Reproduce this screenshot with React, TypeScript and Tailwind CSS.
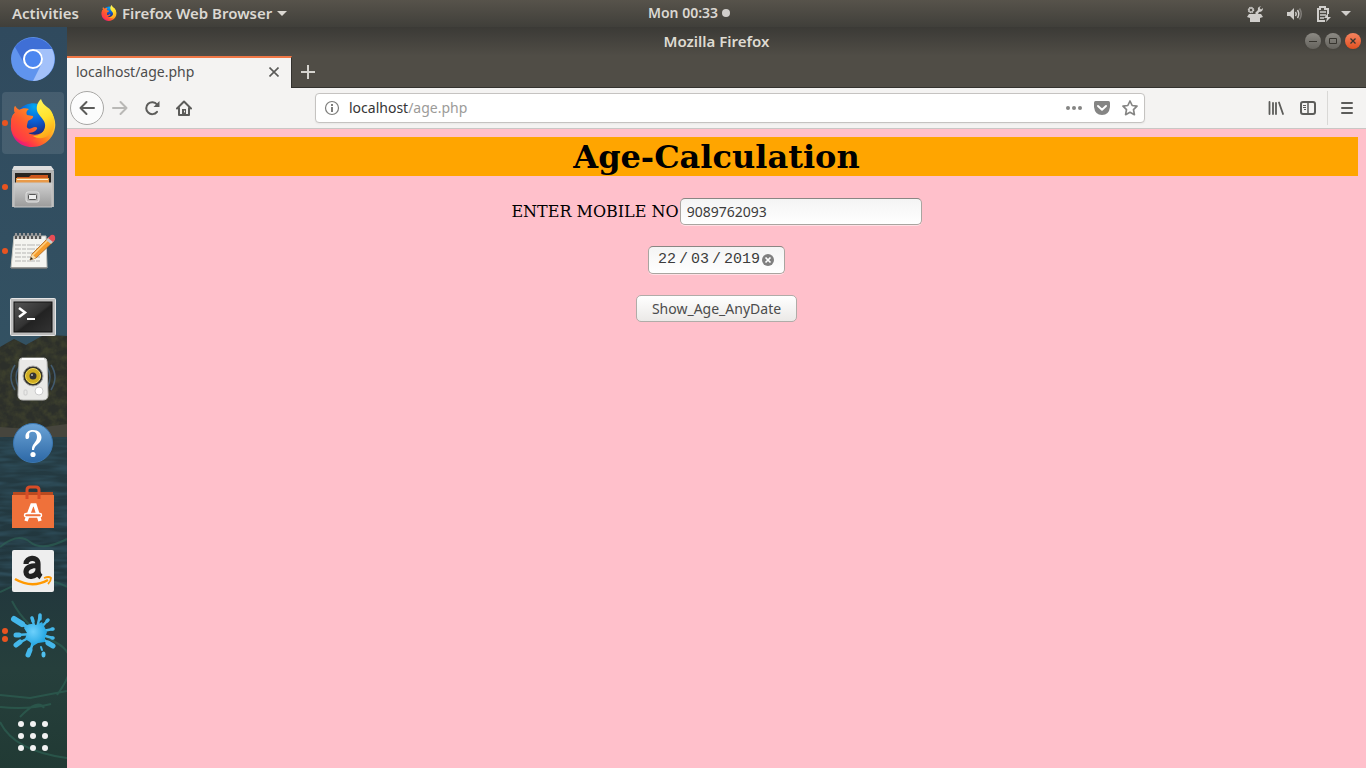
import { useState } from 'react';
import type { ReactNode } from 'react';

function FirefoxLogo({ id, className }: { id: string; className: string }) {
  return (
    <svg viewBox="0 0 46 48" className={className} aria-hidden="true">
      <defs>
        <linearGradient id={id + 'body'} x1="0.9" y1="0.05" x2="0.15" y2="0.9">
          <stop offset="0" stopColor="#fff14a" />
          <stop offset="0.35" stopColor="#ffbd2b" />
          <stop offset="0.6" stopColor="#ff7b20" />
          <stop offset="0.85" stopColor="#ff3647" />
          <stop offset="1" stopColor="#e31587" />
        </linearGradient>
        <linearGradient id={id + 'head'} x1="0.8" y1="0" x2="0.1" y2="1">
          <stop offset="0" stopColor="#ff9a1f" />
          <stop offset="0.5" stopColor="#ff5a2e" />
          <stop offset="1" stopColor="#ff2b50" />
        </linearGradient>
        <radialGradient id={id + 'globe'} cx="0.55" cy="0.1" r="0.9">
          <stop offset="0" stopColor="#00a9f0" />
          <stop offset="0.5" stopColor="#0a62d8" />
          <stop offset="1" stopColor="#1c2a80" />
        </radialGradient>
        <linearGradient id={id + 'flame'} x1="0.3" y1="0" x2="0.6" y2="1">
          <stop offset="0" stopColor="#fff35a" />
          <stop offset="0.5" stopColor="#ffe32e" />
          <stop offset="1" stopColor="#ffa318" />
        </linearGradient>
      </defs>
      <path
        d="M5 7C6 9 8 10 9 11C20 3 36 5 41 13C46 20 47 29 42 37C37 45 29 48 22 48C8 48 0 37 1 25C1 20 2 16 5 14C4 12 4 9 5 7Z"
        fill={'url(#' + id + 'body)'}
      />
      <path
        d="M9 11C16 3 27 3 32 7C37 14 38 24 35 30C32 36 24 37 18 34L13 24Z"
        fill={'url(#' + id + 'globe)'}
      />
      <path
        d="M5 7C6 9 8 10 9 11C12 9 16 9 19 10C16 12 16 14 17 16L23 17C24 19 20 21 18 22L17 26C16 29 19 31 22 29C25 27 28 28 27 30C25 33 21 34 18 34C21 37 26 37 30 36C25 42 17 42 14 43C5 40 0 33 1 25C1 20 2 16 5 14C4 12 4 9 5 7Z"
        fill={'url(#' + id + 'head)'}
      />
      <path
        d="M31 0C26 5 26 10 28 14C31 19 36 22 35 28C34 34 29 37 23 37C31 42 39 38 43 31C46 24 44 12 37 8C34 6 32 3 31 0Z"
        fill={'url(#' + id + 'flame)'}
      />
    </svg>
  );
}

function ChromiumIcon() {
  return (
    <svg viewBox="0 0 44 44" className="size-11" aria-hidden="true">
      <circle cx="22" cy="22" r="22" fill="#6094ee" />
      <path d="M4 10A22 22 0 0 1 41 12H22A10 10 0 0 0 13 26Z" fill="#3f6fd6" />
      <path d="M41 12A22 22 0 0 1 22 44L31 26A10 10 0 0 0 22 12Z" fill="#a3c1fa" />
      <circle cx="22" cy="22" r="9" fill="#4b86f0" stroke="#fff" strokeWidth="2" />
    </svg>
  );
}

function FilesIcon() {
  return (
    <svg viewBox="0 0 44 46" className="h-[46px] w-11" aria-hidden="true">
      <defs>
        <linearGradient id="cabinet" x1="0" y1="0" x2="0" y2="1">
          <stop offset="0" stopColor="#d0d0d0" />
          <stop offset="1" stopColor="#9b9b9b" />
        </linearGradient>
      </defs>
      <path d="M3 2H40L43 7V43H1V7Z" fill="#b5b5b5" />
      <path d="M3 2H40L43 6H1Z" fill="#dedede" />
      <rect x="4" y="9" width="36" height="12" fill="#282420" />
      <path d="M6 13H18L20 11H37V20H6Z" fill="#ce571d" />
      <path d="M5 14H38V21H5Z" fill="#e89a4a" />
      <path d="M6 15.500H37" stroke="#fff0d5" />
      <path d="M3 19H41V43H3Z" fill="url(#cabinet)" stroke="#c9c9c9" />
      <rect x="15" y="28" width="13" height="10" rx="2" fill="#b9b9b9" stroke="#e3e3e3" />
      <rect x="17.500" y="30.500" width="8" height="5" rx="1" fill="#eee" stroke="#555" />
    </svg>
  );
}

function NotesIcon() {
  const rows = [13, 17, 21, 25, 29];
  return (
    <svg viewBox="0 0 46 38" className="h-[38px] w-[46px]" aria-hidden="true">
      <path d="M4 4H36L37 36H1Z" fill="#f4f4f0" stroke="#c6c6c0" />
      <path d="M1 36H37" stroke="#555" />
      {rows.map((y) => (
        <path key={y} d={'M5 ' + y + 'H30'} stroke="#b5b5b3" strokeDasharray="6 1 4 1 8 1" />
      ))}
      <path d="M6 1V7M10 1V7M14 1V7M18 1V7M22 1V7M26 1V7M30 1V7" stroke="#555" strokeWidth="2.500" />
      <path d="M6 1V4M10 1V4M14 1V4M18 1V4M22 1V4M26 1V4M30 1V4" stroke="#ddd" />
      <path d="M20 28L22 22L38 6L43 10L26 26Z" fill="#f59c2d" stroke="#a45a12" strokeWidth="0.700" />
      <path d="M23 23L39 7" stroke="#ffd083" strokeWidth="1.500" />
      <path d="M20 28L22 22L26 26Z" fill="#f4dcae" />
      <path d="M20 28L21 25L23 27Z" fill="#222" />
      <path d="M36 8L39 5L44 9L41 12Z" fill="#cacaca" />
      <path d="M38 6L41 3Q46 2 45 8L43 10Z" fill="#e84d55" />
    </svg>
  );
}

function TerminalIcon() {
  return (
    <svg viewBox="0 -4 46 42" className="h-[42px] w-[46px]" aria-hidden="true">
      <defs>
        <linearGradient id="screen" x1="0" y1="0" x2="1" y2="1">
          <stop offset="0" stopColor="#555" />
          <stop offset="0.5" stopColor="#333" />
          <stop offset="0.55" stopColor="#222" />
          <stop offset="1" stopColor="#333" />
        </linearGradient>
      </defs>
      <rect x="0.500" y="0.500" width="45" height="37" rx="1" fill="#bcbcbc" stroke="#e5e5e5" />
      <rect x="4" y="4" width="38" height="30" fill="url(#screen)" stroke="#111" />
      <path d="M9 10L15 14.500L9 19" fill="none" stroke="#fff" strokeWidth="2.500" />
      <path d="M17 21H25" stroke="#fff" strokeWidth="2" />
    </svg>
  );
}

function SpeakerIcon() {
  return (
    <svg viewBox="0 0 50 44" className="h-11 w-[50px]" aria-hidden="true">
      <path d="M7 8Q-1 20 7 33M11 10Q5 20 11 31M43 8Q51 20 43 33M39 10Q45 20 39 31" fill="none" stroke="#527caa" strokeWidth="1.500" opacity="0.550" />
      <path d="M14 1H36Q39 1 39 5L40 38Q40 43 35 43H15Q10 43 10 38L11 5Q11 1 14 1Z" fill="#e9e9e7" stroke="#bdbdbb" />
      <path d="M14 2H36" stroke="#fff" strokeWidth="2" />
      <circle cx="25" cy="19" r="10" fill="#34332c" stroke="#aaa" />
      <circle cx="25" cy="19" r="7.500" fill="#d0ad22" stroke="#f2db59" />
      <circle cx="25" cy="19" r="3.500" fill="#333" />
      <circle cx="24" cy="18" r="1" fill="#bbb" />
      <circle cx="31" cy="34" r="4" fill="#fff" stroke="#ccc" />
      <rect x="16" y="33" width="3" height="5" rx="1" fill="none" stroke="#ccc" />
    </svg>
  );
}

function HelpIcon() {
  return (
    <svg viewBox="0 0 40 40" className="size-10" aria-hidden="true">
      <defs>
        <linearGradient id="help" x1="0" y1="0" x2="0" y2="1">
          <stop offset="0" stopColor="#6ba3d6" />
          <stop offset="1" stopColor="#2d68a6" />
        </linearGradient>
      </defs>
      <circle cx="20" cy="20" r="19.500" fill="url(#help)" stroke="#3b77b2" />
      <path
        d="M12.500 14.500C12 9.500 15.500 7 20 7C25.500 7 28.500 10.500 28.500 14.500C28.500 20.500 21.500 21.500 21 27H19C18.500 20.500 24 19.500 24 14C24 10.500 22.500 8.800 19.500 8.800C17 8.800 15.800 10 16.200 12.200C16.500 14 16 16 14.200 16C13.200 16 12.600 15.500 12.500 14.500Z"
        fill="#fff"
      />
      <circle cx="20" cy="31.500" r="2.600" fill="#fff" />
    </svg>
  );
}

function SoftwareIcon() {
  return (
    <svg viewBox="0 0 42 44" className="h-11 w-[42px]" aria-hidden="true">
      <path d="M1 7H41L42 43H0Z" fill="#f0743c" />
      <path d="M1 7H41V10H1Z" fill="#b94a20" />
      <path d="M0 10H42V43H0Z" fill="#ef713a" />
      <path d="M15 14V5Q15 2 18 2H24Q27 2 27 5V14" fill="none" stroke="#d74c27" strokeWidth="3" />
      <path d="M14 36L20 20H23L28 36" fill="none" stroke="#fff" strokeWidth="3.500" />
      <rect x="12.500" y="28.500" width="17" height="3.500" rx="1.700" fill="#ef713a" stroke="#fff" strokeWidth="1.500" />
    </svg>
  );
}

function AmazonIcon() {
  return (
    <svg viewBox="0 0 42 42" className="size-[42px]" aria-hidden="true">
      <rect width="42" height="42" rx="2" fill="#eee" />
      <path d="M14 14C14 7.500 26 5.500 26 14V21Q26 25 29 27M26 15.500C19 15.500 14 17.500 14 22C14 28.500 24 27.500 26 20.500" fill="none" stroke="#222" strokeWidth="5.200" />
      <path d="M3 29Q20 39 36 30" fill="none" stroke="#ff9900" strokeWidth="2.500" />
      <path d="M32 28Q37 26 39 28Q39 31 36 34" fill="none" stroke="#ff9900" strokeWidth="1.800" />
    </svg>
  );
}

function SplashIcon() {
  return (
    <svg viewBox="0 0 46 46" className="size-[46px]" aria-hidden="true">
      <defs>
        <radialGradient id="splash" cx="0.4" cy="0.4" r="0.7">
          <stop offset="0" stopColor="#6dd0fb" />
          <stop offset="1" stopColor="#169fdf" />
        </radialGradient>
      </defs>
      <g stroke="#44b7ea" strokeLinecap="round">
        <path d="M26 21L5 7" strokeWidth="3.500" />
        <path d="M4 7L12 12" strokeWidth="6" />
        <path d="M26 21L22 6M26 21L30 3M27 20L38 8M28 20L43 17M28 22L43 26M28 24L42 33M25 24L19 43M22 22L7 23M22 24L7 32" strokeWidth="2.500" />
        <path d="M22 6L23 9M30 3L30 7M38 8L37 9M42 17H43M42 26H43" strokeWidth="3.500" />
        <path d="M38 31L43 34M20 38L18 43M6 33L10 30M6 23H9" strokeWidth="5" />
        <path d="M31 35L32 38" strokeWidth="2" />
      </g>
      <path d="M17 13Q22 11 26 13L32 10L35 16L37 20L35 26L35 30L28 31L23 34L20 30L15 27L17 21L14 16Z" fill="url(#splash)" />
      <ellipse cx="33.500" cy="42.500" rx="2" ry="3" fill="#50c0ef" />
    </svg>
  );
}

function Wallpaper() {
  return (
    <svg viewBox="0 0 67 741" preserveAspectRatio="none" className="absolute inset-0 h-full w-full" aria-hidden="true">
      <defs>
        <linearGradient id="sky" x1="0" y1="0" x2="0" y2="1">
          <stop offset="0" stopColor="#304a5e" />
          <stop offset="1" stopColor="#375b68" />
        </linearGradient>
        <linearGradient id="lake" x1="0" y1="0" x2="0" y2="1">
          <stop offset="0" stopColor="#253b43" />
          <stop offset="0.4" stopColor="#21363d" />
          <stop offset="0.7" stopColor="#263f3c" />
          <stop offset="1" stopColor="#213a34" />
        </linearGradient>
        <filter id="leaves" x="0" y="0" width="1" height="1" colorInterpolationFilters="sRGB">
          <feTurbulence type="fractalNoise" baseFrequency="0.14" numOctaves="3" />
          <feColorMatrix result="spots" values="0 0 0 0 0.25 0 0 0 0 0.26 0 0 0 0 0.18 1.8 0 0 0 -0.6" />
          <feComposite in="spots" in2="SourceGraphic" operator="in" />
        </filter>
        <filter id="ripples" x="0" y="0" width="1" height="1" colorInterpolationFilters="sRGB">
          <feTurbulence type="fractalNoise" baseFrequency="0.035 0.2" numOctaves="2" />
          <feColorMatrix values="0 0 0 0 0.18 0 0 0 0 0.3 0 0 0 0 0.35 2.4 0 0 0 -0.9" />
        </filter>
      </defs>
      <rect width="67" height="741" fill="url(#sky)" />
      <path d="M0 320L14 312L26 318L44 308L67 309V412H0Z" fill="#2c2f2a" />
      <path d="M0 320L14 312L26 318L44 308L67 309V404H0Z" filter="url(#leaves)" />
      <path d="M0 400L30 402L67 397V411H0Z" fill="#46453d" />
      <rect y="410" width="67" height="331" fill="url(#lake)" />
      <rect y="410" width="67" height="150" filter="url(#ripples)" />
      <g fill="none" stroke="#2f6656" strokeWidth="2" opacity="0.6">
        <path d="M0 520Q18 505 30 515T67 512M0 565Q40 545 67 560M12 574Q25 600 55 615T57 668M0 668L30 671L67 664M0 680Q28 683 51 677M0 695Q14 724 67 731M20 690Q38 671 44 681" />
      </g>
    </svg>
  );
}

type DockEntry = { name: string; icon: ReactNode; windows: number; active?: boolean };

const dock: DockEntry[] = [
  { name: 'Chromium', icon: <ChromiumIcon />, windows: 0 },
  { name: 'Firefox', icon: <FirefoxLogo id="dock" className="h-12 w-[46px]" />, windows: 1, active: true },
  { name: 'Files', icon: <FilesIcon />, windows: 1 },
  { name: 'Text Editor', icon: <NotesIcon />, windows: 1 },
  { name: 'Terminal', icon: <TerminalIcon />, windows: 0 },
  { name: 'Rhythmbox', icon: <SpeakerIcon />, windows: 0 },
  { name: 'Help', icon: <HelpIcon />, windows: 0 },
  { name: 'Ubuntu Software', icon: <SoftwareIcon />, windows: 0 },
  { name: 'Amazon', icon: <AmazonIcon />, windows: 0 },
  { name: 'Splash', icon: <SplashIcon />, windows: 2 },
];

function TopBar() {
  return (
    <header className="grid h-[27px] shrink-0 grid-cols-[1fr_auto_1fr] items-center bg-linear-to-b from-[#57534b] to-[#403f3a] px-3 text-[15px] leading-5 font-semibold text-[#dbd8d2]">
      <div className="flex items-center gap-[22px] pb-px">
        <button type="button">Activities</button>
        <button type="button" className="flex items-center gap-[5px]">
          <FirefoxLogo id="bar" className="size-4" />
          <span>Firefox Web Browser</span>
          <svg viewBox="0 0 10 5" className="h-[5px] w-2.5" aria-hidden="true">
            <path d="M0 0H10L5 5Z" fill="currentColor" />
          </svg>
        </button>
      </div>
      <button type="button" className="flex items-center gap-1 pb-px pl-3 text-sm">
        Mon 00:33
        <span className="size-2 rounded-full bg-[#d0cecb]" />
      </button>
      <div className="flex items-center justify-end pr-[3px] text-[#d0cecb]">
        <button type="button" aria-label="Updates" className="mr-6">
          <svg viewBox="0 0 16 16" className="size-4" fill="currentColor" aria-hidden="true">
            <circle cx="4" cy="4" r="2.500" fill="none" stroke="currentColor" strokeWidth="1.500" strokeDasharray="1.300 0.660" />
            <circle cx="4" cy="4" r="2" fill="none" stroke="currentColor" />
            <path d="M8 7L11 4Q10 1 14 0L12.500 2L14 3.500L16 2Q16 6 12 6L11 8H9Z" />
            <path d="M2 8H14L16 11L13 12V16H3V12L0 11Z" />
          </svg>
        </button>
        <button type="button" aria-label="Volume" className="mr-3.5">
          <svg viewBox="0 0 16 14" className="h-3.5 w-4" fill="none" stroke="currentColor" strokeWidth="1.500" aria-hidden="true">
            <path d="M0 5H3L7 1V13L3 9H0Z" fill="currentColor" stroke="none" />
            <path d="M8.500 5Q10 7 8.500 9M10.500 3Q13 7 10.500 11" />
            <path d="M12.500 1.500Q16 7 12.500 12.500" opacity="0.4" />
          </svg>
        </button>
        <button type="button" aria-label="Battery" className="mr-[9px]">
          <svg viewBox="0 0 15 16" className="h-4 w-[15px]" fill="none" stroke="currentColor" aria-hidden="true">
            <path d="M8 15H1V3H3V1H8V3H11V8" strokeWidth="2" />
            <path d="M3 6H9M3 9H9M3 12H7" strokeWidth="1.500" />
            <path d="M11 7L7 12H10L9 16L14 11H11Z" fill="currentColor" stroke="none" />
          </svg>
        </button>
        <button type="button" aria-label="System menu">
          <svg viewBox="0 0 10 5" className="h-[5px] w-2.5" aria-hidden="true">
            <path d="M0 0H10L5 5Z" fill="currentColor" />
          </svg>
        </button>
      </div>
    </header>
  );
}

function Dock() {
  return (
    <nav aria-label="Dock" className="relative w-[67px] shrink-0 overflow-hidden bg-[#304a5e]">
      <Wallpaper />
      <div className="relative flex h-full flex-col">
        {dock.map((entry) => (
          <button
            key={entry.name}
            type="button"
            aria-label={entry.name}
            className="relative flex h-16 shrink-0 items-center justify-center pr-0.5"
          >
            {entry.active && <span className="absolute inset-y-px right-[3px] left-0.5 rounded bg-white/10" />}
            <span className="absolute top-1/2 left-0.5 flex -translate-y-1/2 flex-col gap-0.5">
              {Array.from({ length: entry.windows }, (_, i) => (
                <span key={i} className="size-1.5 rounded-full bg-[#e95420]" />
              ))}
            </span>
            <span className="relative">{entry.icon}</span>
          </button>
        ))}
        <button type="button" aria-label="Show Applications" className="mt-auto flex h-16 items-center justify-center pr-0.5">
          <span className="grid grid-cols-3 gap-1.5">
            {Array.from({ length: 9 }, (_, i) => (
              <span key={i} className="size-1.5 rounded-full bg-[#f2f2f2]" />
            ))}
          </span>
        </button>
      </div>
    </nav>
  );
}

function TitleBar() {
  return (
    <div className="grid h-[29px] shrink-0 grid-cols-[1fr_auto_1fr] items-center bg-linear-to-b from-[#3b3a36] to-[#504d46] px-[5px] pb-0.5">
      <h1 className="col-start-2 text-[15px] leading-5 font-semibold text-[#dfdbd2]">Mozilla Firefox</h1>
      <div className="flex items-center justify-end gap-1">
        <button type="button" aria-label="Minimize" className="flex size-4 items-center justify-center rounded-full bg-linear-to-b from-[#8c8a84] to-[#65635d] shadow-xs">
          <svg viewBox="0 0 8 8" className="size-2" stroke="#37352f" aria-hidden="true">
            <path d="M0 4.500H8" />
          </svg>
        </button>
        <button type="button" aria-label="Maximize" className="flex size-4 items-center justify-center rounded-full bg-linear-to-b from-[#8c8a84] to-[#65635d] shadow-xs">
          <svg viewBox="0 0 8 8" className="size-2" fill="none" stroke="#37352f" aria-hidden="true">
            <path d="M0.500 1.500H7.500V6.500H0.500Z" />
          </svg>
        </button>
        <button type="button" aria-label="Close window" className="flex size-4 items-center justify-center rounded-full bg-linear-to-b from-[#f5835e] to-[#e2501d] shadow-xs">
          <svg viewBox="0 0 8 8" className="size-2" stroke="#37352f" strokeWidth="1.300" aria-hidden="true">
            <path d="M1.500 1.500L6.500 6.500M6.500 1.500L1.500 6.500" />
          </svg>
        </button>
      </div>
    </div>
  );
}

function TabStrip() {
  return (
    <div className="flex h-8 shrink-0 bg-[#504d46]">
      <div className="flex w-[225px] items-center justify-between border-t-2 border-r border-t-[#f07746] border-r-[#33322e] bg-[#f4f3f2] pr-3 pb-0.5 pl-[9px]">
        <span className="text-sm text-[#4c4c4c]">localhost/age.php</span>
        <button type="button" aria-label="Close tab">
          <svg viewBox="0 0 10 10" className="size-2.5" stroke="#5a5a58" strokeWidth="1.600" aria-hidden="true">
            <path d="M0.500 0.500L9.500 9.500M9.500 0.500L0.500 9.500" />
          </svg>
        </button>
      </div>
      <div className="flex flex-1 items-center border-b border-[#33322e] pl-[9px]">
        <button type="button" aria-label="New tab">
          <svg viewBox="0 0 14 14" className="size-3.5" stroke="#d6d4cf" strokeWidth="2" aria-hidden="true">
            <path d="M7 0V14M0 7H14" />
          </svg>
        </button>
      </div>
    </div>
  );
}

function NavBar() {
  const [address, setAddress] = useState('');
  return (
    <div className="flex h-[41px] shrink-0 items-center border-b border-[#c9c7c5] bg-[#f4f3f2] pr-[13px] pl-[3px] text-[#5c5c5a]">
      <button type="button" aria-label="Back" className="flex size-[34px] items-center justify-center rounded-full border border-[#a8a7a5] bg-[#fcfcfc]">
        <svg viewBox="0 0 16 16" className="size-4" fill="none" stroke="currentColor" strokeWidth="2" strokeLinecap="round" strokeLinejoin="round" aria-hidden="true">
          <path d="M15 8H1.500M7.500 2L1.500 8L7.500 14" />
        </svg>
      </button>
      <button type="button" aria-label="Forward" className="ml-2 text-[#b9b8b6]">
        <svg viewBox="0 0 16 16" className="size-4" fill="none" stroke="currentColor" strokeWidth="2" strokeLinecap="round" strokeLinejoin="round" aria-hidden="true">
          <path d="M1 8H14.500M8.500 2L14.500 8L8.500 14" />
        </svg>
      </button>
      <button type="button" aria-label="Reload" className="ml-4">
        <svg viewBox="0 0 16 16" className="size-4" fill="none" stroke="currentColor" strokeWidth="2" aria-hidden="true">
          <path d="M13 4.500A6 6 0 1 0 13 11.800" strokeLinecap="round" />
          <path d="M15.500 1V7H9.500Z" fill="currentColor" stroke="none" />
        </svg>
      </button>
      <button type="button" aria-label="Home" className="ml-4">
        <svg viewBox="0 0 16 16" className="size-4" fill="none" stroke="currentColor" strokeWidth="2" strokeLinejoin="round" strokeLinecap="round" aria-hidden="true">
          <path d="M1 8.500L8 1.500L15 8.500" />
          <path d="M3 8V15H13V8" />
          <path d="M6 15V9H10V15Z" fill="currentColor" stroke="none" />
          <path d="M8.500 11V12" stroke="#f4f3f2" strokeWidth="1" />
        </svg>
      </button>
      <div className="ml-[123px] flex h-[30px] flex-1 items-center rounded-sm border border-[#c5c3c1] bg-white pr-1.5 pl-2 shadow-xs">
        <svg viewBox="0 0 16 16" className="size-4 shrink-0" fill="none" stroke="#7d7d7b" aria-hidden="true">
          <circle cx="8" cy="8" r="6.500" strokeWidth="1.200" />
          <path d="M8 7V12" strokeWidth="2" />
          <path d="M8 4V6" strokeWidth="2" />
        </svg>
        <label className="relative ml-[9px] flex flex-1 items-center text-sm text-[#353535]">
          {address === '' && (
            <span className="pointer-events-none absolute">
              localhost<span className="text-[#9c9b99]">/age.php</span>
            </span>
          )}
          <input
            aria-label="Address"
            value={address}
            onChange={(event) => setAddress(event.target.value)}
            className="w-full bg-transparent outline-none"
          />
        </label>
        <button type="button" aria-label="Page actions">
          <svg viewBox="0 0 16 16" className="size-4" fill="#858584" aria-hidden="true">
            <circle cx="2" cy="8" r="2" />
            <circle cx="8" cy="8" r="2" />
            <circle cx="14" cy="8" r="2" />
          </svg>
        </button>
        <button type="button" aria-label="Save to Pocket" className="ml-3">
          <svg viewBox="0 0 16 16" className="size-4" aria-hidden="true">
            <path d="M1.500 1H14.500Q16 1 16 2.500V7Q15 15 8 15Q1 15 0 7V2.500Q0 1 1.500 1Z" fill="#858584" />
            <path d="M4 6L8 9.700L12 6" fill="none" stroke="#fff" strokeWidth="2" strokeLinecap="round" strokeLinejoin="round" />
          </svg>
        </button>
        <button type="button" aria-label="Bookmark" className="ml-3">
          <svg viewBox="0 0 16 16" className="size-4" aria-hidden="true">
            <path d="M8 1L10.200 5.500L15 6.200L11.500 9.700L12.400 14.700L8 12.300L3.600 14.700L4.500 9.700L1 6.200L5.800 5.500Z" fill="none" stroke="#858584" strokeWidth="1.700" strokeLinejoin="round" />
          </svg>
        </button>
      </div>
      <button type="button" aria-label="Library" className="ml-[123px]">
        <svg viewBox="0 0 16 16" className="size-4" stroke="currentColor" strokeWidth="1.800" strokeLinecap="round" aria-hidden="true">
          <path d="M1.500 2V14M5 3V14M8 3V14M11 2.500L15 14" />
        </svg>
      </button>
      <button type="button" aria-label="Sidebars" className="ml-4">
        <svg viewBox="0 0 16 16" className="size-4" fill="none" stroke="currentColor" aria-hidden="true">
          <rect x="1" y="2" width="14" height="12" rx="2" strokeWidth="2" />
          <path d="M8 2V14" strokeWidth="1.500" />
          <path d="M3 5.500H6M3 7.500H6M4 9.500H6" />
        </svg>
      </button>
      <span className="mr-[13px] ml-[11px] h-[34px] w-px bg-[#d9d8d6]" />
      <button type="button" aria-label="Menu">
        <svg viewBox="0 0 12 12" className="size-3" stroke="currentColor" strokeWidth="2" strokeLinecap="round" aria-hidden="true">
          <path d="M1 1H11M1 6H11M1 11H11" />
        </svg>
      </button>
    </div>
  );
}

function AgePage() {
  const [mobile, setMobile] = useState('9089762093');
  const [day, setDay] = useState('22');
  const [month, setMonth] = useState('03');
  const [year, setYear] = useState('2019');
  const clearDate = () => {
    setDay('');
    setMonth('');
    setYear('');
  };
  return (
    <main className="flex-1 bg-[#ffc0cb] p-2">
      <h2 className="bg-[#ffa500] pt-0.5 text-center font-['DejaVu_Serif',serif] text-[32px] leading-[37px] font-bold text-black">
        Age-Calculation
      </h2>
      <form className="mt-[22px] flex flex-col items-center gap-[21px] text-sm text-[#3c3c3c]" onSubmit={(event) => event.preventDefault()}>
        <div className="flex items-center gap-px">
          <label htmlFor="mobile" className="font-['DejaVu_Serif',serif] text-base text-black">
            ENTER MOBILE NO
          </label>
          <input
            id="mobile"
            value={mobile}
            onChange={(event) => setMobile(event.target.value)}
            className="h-[27px] w-[242px] rounded-[5px] border border-[#a9a5a0] border-t-[#8a8683] bg-linear-to-b from-[#f4f4f4] to-white px-1.5 shadow-[0_1px_0_rgba(255,255,255,0.5)] outline-none"
          />
        </div>
        <div
          role="group"
          aria-label="Date"
          className="flex h-7 items-center rounded-[5px] border border-[#a9a5a0] border-t-[#8a8683] bg-linear-to-b from-[#f4f4f4] to-white pr-2.5 pl-[9px] font-['Liberation_Mono',monospace] text-[15px] shadow-[0_1px_0_rgba(255,255,255,0.5)]"
        >
          <input aria-label="Day" value={day} onChange={(event) => setDay(event.target.value)} className="w-[19px] bg-transparent outline-none" />
          <span className="px-0.5">/</span>
          <input aria-label="Month" value={month} onChange={(event) => setMonth(event.target.value)} className="ml-px w-[19px] bg-transparent outline-none" />
          <span className="px-0.5">/</span>
          <input aria-label="Year" value={year} onChange={(event) => setYear(event.target.value)} className="ml-px w-[38px] bg-transparent outline-none" />
          <button type="button" aria-label="Clear date" onClick={clearDate}>
            <svg viewBox="0 0 12 12" className="size-3" aria-hidden="true">
              <circle cx="6" cy="6" r="6" fill="#7f7f7f" />
              <path d="M3.500 3.500L8.500 8.500M8.500 3.500L3.500 8.500" stroke="#fff" strokeWidth="1.700" />
            </svg>
          </button>
        </div>
        <button type="submit" className="h-[27px] w-[161px] rounded-[5px] border border-[#b0aca8] bg-linear-to-b from-white to-[#ebe9e7] text-[#4c4c4c]">
          Show_Age_AnyDate
        </button>
      </form>
    </main>
  );
}

export default function App() {
  return (
    <div className="flex min-h-screen flex-col font-['Noto_Sans','Open_Sans',sans-serif]">
      <TopBar />
      <div className="flex flex-1">
        <Dock />
        <div className="flex min-w-0 flex-1 flex-col">
          <TitleBar />
          <TabStrip />
          <NavBar />
          <AgePage />
        </div>
      </div>
    </div>
  );
}
